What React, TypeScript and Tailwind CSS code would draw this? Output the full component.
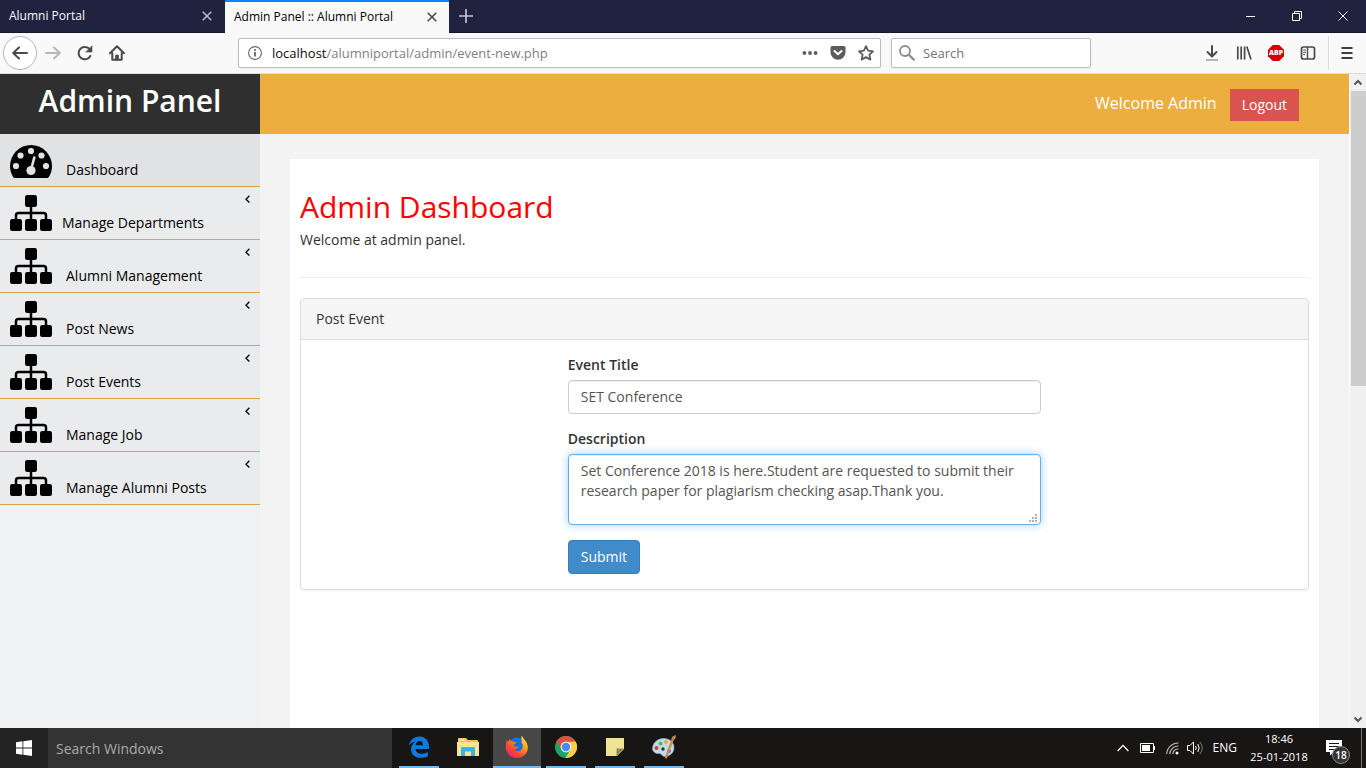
import React from "react";

const ui = "font-['Open_Sans',sans-serif]";

function CloseIcon({ className }: { className: string }) {
  return (
    <svg width="10" height="10" viewBox="0 0 10 10" className={className} aria-hidden="true">
      <path d="M0.7 0.7 9.3 9.3M9.3 0.7 0.7 9.3" stroke="currentColor" strokeWidth="1.6" fill="none" />
    </svg>
  );
}

function TabStrip() {
  return (
    <header className="flex h-[33px] shrink-0 border-b border-[#14162d] bg-[#202340] text-[12px]">
      <div className="-mb-px flex h-[33px] w-[225px] items-center border-b border-[#14162d] pr-[13px] pl-[9px] text-[#f9f9fa]">
        <span className="flex-1 truncate">Alumni Portal</span>
        <button type="button" aria-label="Close Alumni Portal"><CloseIcon className="text-[#b5b6c4]" /></button>
      </div>
      <div className="-mb-px flex h-[33px] w-[224px] items-center border-t-2 border-[#0a84ff] bg-[#f9f9fa] pr-[12px] pb-[2px] pl-[9px] text-black">
        <span className="flex-1 truncate">Admin Panel :: Alumni Portal</span>
        <button type="button" aria-label="Close Admin Panel"><CloseIcon className="text-[#4a4a4f]" /></button>
      </div>
      <button type="button" aria-label="New tab" className="ml-[10px] flex w-[14px] items-center justify-center">
        <svg width="14" height="14" viewBox="0 0 14 14" aria-hidden="true">
          <path d="M7 0V14M0 7H14" stroke="#c3c4d0" strokeWidth="1.7" />
        </svg>
      </button>
      <div className="ml-auto flex">
        <button type="button" aria-label="Minimize" className="flex w-[46px] items-center justify-center">
          <svg width="10" height="10" viewBox="0 0 10 10"><path d="M0 5.5H9" stroke="#fff" /></svg>
        </button>
        <button type="button" aria-label="Restore" className="flex w-[46px] items-center justify-center">
          <svg width="10" height="10" viewBox="0 0 10 10">
            <path d="M0.5 2.5H7.5V9.5H0.5ZM2.5 2.5V0.5H9.5V7.5H7.5" stroke="#fff" fill="none" />
          </svg>
        </button>
        <button type="button" aria-label="Close window" className="flex w-[46px] items-center justify-center">
          <svg width="10" height="10" viewBox="0 0 10 10"><path d="M0.5 0.5 9.5 9.5M9.5 0.5 0.5 9.5" stroke="#fff" /></svg>
        </button>
      </div>
    </header>
  );
}

const toolButton = "flex h-8 w-8 shrink-0 items-center justify-center";

function Toolbar() {
  return (
    <nav className="flex h-[41px] shrink-0 items-center border-b border-[#dcdcdc] bg-[#f9f9fa] pl-[3px]">
      <button type="button" aria-label="Back" className="flex h-[34px] w-[34px] shrink-0 items-center justify-center rounded-full border border-[#b5b5b5] bg-white">
        <svg width="16" height="16" viewBox="0 0 16 16" fill="none" stroke="#4a4a4d" strokeWidth="2" strokeLinecap="round" strokeLinejoin="round">
          <path d="M15 8H1.5M7 2.500 1.2 8 7 13.500" />
        </svg>
      </button>
      <button type="button" aria-label="Forward" className={toolButton}>
        <svg width="16" height="16" viewBox="0 0 16 16" fill="none" stroke="#b7b7b9" strokeWidth="2" strokeLinecap="round" strokeLinejoin="round">
          <path d="M1 8H14.5M9 2.500 14.8 8 9 13.500" />
        </svg>
      </button>
      <button type="button" aria-label="Reload" className={toolButton}>
        <svg width="16" height="16" viewBox="0 0 16 16" fill="none" stroke="#4a4a4d" strokeWidth="2" strokeLinecap="round">
          <path d="M13.3 11A6.2 6.2 0 1 1 12 3.6" />
          <path d="M15 1V7H9Z" fill="#4a4a4d" strokeWidth="0.6" />
        </svg>
      </button>
      <button type="button" aria-label="Home" className={toolButton}>
        <svg width="16" height="16" viewBox="0 0 16 16" fill="none" stroke="#4a4a4d" strokeWidth="2" strokeLinecap="round" strokeLinejoin="round">
          <path d="M1 8.3 8 1.3 15 8.3M3.3 8V14.8H12.7V8" />
          <path d="M6.500 14.8V10H9.500V14.8Z" fill="#4a4a4d" strokeWidth="0.6" />
        </svg>
      </button>
      <div className="w-[105px] shrink" />
      <div className="flex h-[30px] min-w-0 flex-1 items-center rounded-[2px] border border-[#bdbdbd] bg-white shadow-[0_1px_3px_rgba(0,0,0,0.06)]">
        <svg width="14" height="14" viewBox="0 0 14 14" className="ml-[9px] shrink-0">
          <circle cx="7" cy="7" r="6.4" fill="none" stroke="#6a6a6d" strokeWidth="1.1" />
          <path d="M7 6V10.5" stroke="#5a5a5d" strokeWidth="1.7" />
          <circle cx="7" cy="3.9" r="1" fill="#5a5a5d" />
        </svg>
        <a href="#address" className="ml-[10px] min-w-0 flex-1 truncate pt-[2px] text-[13px] text-[#808083]">
          <span className="text-[#0c0c0d]">localhost</span>/alumniportal/admin/event-new.php
        </a>
        <div className="mr-[6px] flex shrink-0 items-center gap-[12px]">
          <button type="button" aria-label="Page actions">
            <svg width="16" height="16" viewBox="0 0 16 16" fill="#5c5c5f">
              <circle cx="2.4" cy="8" r="1.9" /><circle cx="8" cy="8" r="1.9" /><circle cx="13.6" cy="8" r="1.9" />
            </svg>
          </button>
          <button type="button" aria-label="Save to Pocket">
            <svg width="16" height="16" viewBox="0 0 16 16">
              <path d="M2 1H14A1.8 1.8 0 0 1 15.5 2.8V7.3A7.5 7.5 0 0 1 0.5 7.3V2.8A1.8 1.8 0 0 1 2 1Z" fill="#5c5c5f" />
              <path d="M4.5 6 8 9.3 11.5 6" fill="none" stroke="#fff" strokeWidth="2" strokeLinecap="round" strokeLinejoin="round" />
            </svg>
          </button>
          <button type="button" aria-label="Bookmark">
            <svg width="16" height="16" viewBox="0 0 16 16">
              <path d="M8 1.2 10.1 5.7 15 6.3 11.4 9.6 12.4 14.6 8 12.1 3.6 14.6 4.6 9.6 1 6.3 5.9 5.7Z" fill="none" stroke="#5c5c5f" strokeWidth="1.8" strokeLinejoin="round" />
            </svg>
          </button>
        </div>
      </div>
      <label className="ml-[10px] flex h-[30px] w-[200px] shrink-0 items-center rounded-[2px] border border-[#bdbdbd] bg-white pl-[7px] shadow-[0_1px_3px_rgba(0,0,0,0.06)]">
        <svg width="16" height="16" viewBox="0 0 16 16" className="shrink-0" fill="none" stroke="#8b8b8d" strokeWidth="1.8" strokeLinecap="round">
          <circle cx="6" cy="6" r="5" /><path d="M9.8 9.8 14.8 14.6" strokeWidth="2.2" />
        </svg>
        <input type="text" aria-label="Search" placeholder="Search" className="ml-2 w-full min-w-0 pt-[2px] text-[13px] outline-none placeholder:text-[#737376]" />
      </label>
      <div className="w-[105px] shrink" />
      <button type="button" aria-label="Downloads" className={toolButton}>
        <svg width="14" height="16" viewBox="0 0 14 16" fill="none">
          <path d="M7 1V11M2.5 7 7 11.5 11.5 7" stroke="#4a4a4d" strokeWidth="2" strokeLinecap="round" strokeLinejoin="round" />
          <path d="M1 15H13" stroke="#b4b4b6" strokeWidth="2" />
        </svg>
      </button>
      <button type="button" aria-label="Library" className={toolButton}>
        <svg width="16" height="14" viewBox="0 0 16 14" stroke="#4a4a4d" strokeWidth="1.700">
          <path d="M1.8 0.5V13.5M5.2 0.5V13.5M8.6 0.5V13.5M10.8 0.6 15 13.4" />
        </svg>
      </button>
      <button type="button" aria-label="Adblock Plus" className={toolButton}>
        <span className="flex h-4 w-4 items-center justify-center bg-[#d40000] text-[7px] font-extrabold text-white [clip-path:polygon(30%_0,70%_0,100%_30%,100%_70%,70%_100%,30%_100%,0_70%,0_30%)]">
          ABP
        </span>
      </button>
      <button type="button" aria-label="Sidebars" className={toolButton}>
        <svg width="16" height="16" viewBox="0 0 16 16" fill="none" stroke="#4a4a4d">
          <rect x="1.500" y="2" width="13" height="12" rx="2" strokeWidth="1.700" />
          <path d="M7.5 2V14" strokeWidth="1.4" /><path d="M3.200 5H6M3.200 7.3H6M3.200 9.6H5" />
        </svg>
      </button>
      <div className="ml-1 h-[34px] w-px bg-[#dcdcdc]" />
      <button type="button" aria-label="Menu" className="flex h-8 w-9 shrink-0 items-center justify-center">
        <svg width="12" height="12" viewBox="0 0 12 12" stroke="#3f3f43" strokeWidth="2"><path d="M0.500 1H11.500M0.500 6H11.500M0.500 11H11.500" /></svg>
      </button>
      <div className="w-px" />
    </nav>
  );
}

function GaugeIcon() {
  return (
    <svg width="42" height="33" viewBox="0 0 42 33" aria-hidden="true">
      <path d="M21 0A21 21 0 0 0 0 21C0 25 1.100 28.800 3.200 32.100A2 2 0 0 0 4.700 33H37.300A2 2 0 0 0 38.800 32.100C40.900 28.800 42 25 42 21A21 21 0 0 0 21 0Z" fill="#000" />
      <g fill="#e0e2e4">
        <circle cx="6" cy="21" r="3.100" /><circle cx="10.500" cy="10.500" r="3.100" /><circle cx="21" cy="6" r="3.100" />
        <circle cx="31.500" cy="10.500" r="3.100" /><circle cx="36" cy="21" r="3.100" /><circle cx="21" cy="25.500" r="4.600" />
      </g>
      <path d="M21.500 23 24.300 12.500" stroke="#e0e2e4" strokeWidth="2.600" strokeLinecap="round" />
    </svg>
  );
}

function SitemapIcon() {
  return (
    <svg width="42" height="36" viewBox="0 0 42 36" aria-hidden="true">
      <path d="M6 25V20.500Q6 18 8.500 18H33.500Q36 18 36 20.500V25M21 10V26" fill="none" stroke="#000" strokeWidth="2.500" />
      <rect x="15" y="0" width="12" height="12" rx="2.200" /><rect x="0" y="24" width="12" height="12" rx="2.200" />
      <rect x="15" y="24" width="12" height="12" rx="2.200" /><rect x="30" y="24" width="12" height="12" rx="2.200" />
    </svg>
  );
}

const menu = ["Manage Departments", "Alumni Management", "Post News", "Post Events", "Manage Job", "Manage Alumni Posts"];

function Sidebar() {
  return (
    <aside className="w-[260px] shrink-0 bg-[#eff1f3] text-[14px] leading-5 text-black">
      <div className="h-[60px] bg-[#2f2f2f] pt-[7px] text-center text-[30px] leading-[40px] font-semibold text-white">Admin Panel</div>
      <ul>
        <li>
          <a href="#dashboard" className="flex h-[53px] items-end gap-[14px] border-b border-[#d9a441] bg-[#e0e2e4] px-[10px] pb-[6px]">
            <span className="pb-[2px]"><GaugeIcon /></span>Dashboard
          </a>
        </li>
        {menu.map((name, i) => (
          <li key={name}>
            <a href="#menu" className={`flex h-[53px] items-end border-b border-[#d9a441] bg-[#e9ebed] px-[10px] pb-[6px] ${i === 0 ? "gap-[10px]" : "gap-[14px]"}`}>
              <span className="pb-[2px]"><SitemapIcon /></span>
              <span>{name}</span>
              <svg width="5" height="8" viewBox="0 0 5 8" className="mt-2 ml-auto self-start" fill="none" stroke="#111" strokeWidth="1.400">
                <path d="M4.400 0.800 1 4.200 4.400 7.600" />
              </svg>
            </a>
          </li>
        ))}
      </ul>
    </aside>
  );
}

function EventForm() {
  return (
    <section className="rounded-[4px] border border-[#ddd] shadow-[0_1px_1px_rgba(0,0,0,0.05)]">
      <h2 className="rounded-t-[3px] border-b border-[#ddd] bg-[#f5f5f5] px-[15px] py-[10px]">Post Event</h2>
      <form className="mx-auto w-1/2 p-[15px]" onSubmit={(e) => e.preventDefault()}>
        <label htmlFor="event-title" className="block font-semibold">Event Title</label>
        <input
          id="event-title"
          type="text"
          defaultValue="SET Conference"
          className="mt-[5px] mb-[15px] block h-[34px] w-full rounded-[4px] border border-[#ccc] bg-white px-3 pb-[2px] text-[#555] shadow-[inset_0_1px_1px_rgba(0,0,0,0.075)] outline-none"
        />
        <label htmlFor="event-description" className="block font-semibold">Description</label>
        <div className="relative mt-[5px] mb-[15px]">
          <textarea
            id="event-description"
            defaultValue="Set Conference 2018 is here.Student are requested to submit their research paper for plagiarism checking asap.Thank you."
            className="block h-[71px] w-full resize-none rounded-[4px] border border-[#66afe9] bg-white px-3 py-[6px] text-[#555] shadow-[inset_0_1px_1px_rgba(0,0,0,0.075),0_0_8px_rgba(102,175,233,0.6)] outline-none"
          />
          <svg width="8" height="8" viewBox="0 0 8 8" fill="#b3b3b3" className="absolute right-1 bottom-[3px]" aria-hidden="true">
            <path d="M6 0H8V2H6ZM3 3H5V5H3ZM6 3H8V5H6ZM0 6H2V8H0ZM3 6H5V8H3ZM6 6H8V8H6Z" />
          </svg>
        </div>
        <button type="submit" className="block h-[34px] rounded-[4px] border border-[#357ebd] bg-[#428bca] px-3 text-white">Submit</button>
      </form>
    </section>
  );
}

function Page() {
  return (
    <div className="flex min-h-0 flex-1">
      <div className="flex min-w-0 flex-1 overflow-hidden">
        <Sidebar />
        <div className="flex min-w-0 flex-1 flex-col bg-[#f3f3f3] text-[14px] leading-5 text-[#333]">
          <div className="flex h-[60px] shrink-0 items-start justify-end bg-[#ecae3f] pt-[15px] pr-[50px] text-white">
            <span className="mr-[13px] pt-1 text-[16px]">Welcome Admin</span>
            <a href="#logout" className="flex h-8 items-center bg-[#d9534f] px-3">Logout</a>
          </div>
          <main className="mx-[30px] mt-[25px] flex-1 bg-white px-[10px] pt-[31px]">
            <h1 className="text-[30px] leading-[34px] text-[#f00]">Admin Dashboard</h1>
            <p className="mt-[6px]">Welcome at admin panel.</p>
            <hr className="mt-[27px] mb-[20px] border-[#eee]" />
            <EventForm />
          </main>
        </div>
      </div>
      <div className="flex w-[17px] shrink-0 flex-col items-center border-l border-white bg-[#f0f0f0]" aria-hidden="true">
        <svg width="16" height="17" viewBox="0 0 16 17" fill="none" stroke="#555" strokeWidth="2"><path d="M4.500 10.500 8 7 11.500 10.500" /></svg>
        <div className="h-[295px] w-[15px] bg-[#cdcdcd]" />
        <svg width="16" height="17" viewBox="0 0 16 17" className="mt-auto" fill="none" stroke="#555" strokeWidth="2"><path d="M4.500 6.500 8 10 11.500 6.500" /></svg>
      </div>
    </div>
  );
}

function EdgeIcon() {
  return (
    <svg width="22" height="22" viewBox="0 0 22 22">
      <path d="M1 9.500C2 4 6 0.500 11.500 0.500 17.500 0.500 21 5 21 10.500V13H7.500C7.700 16.200 10.500 17.800 13.500 17.800 16 17.800 18 17.200 19.800 16.100V20.300C18 21.300 15.500 21.800 12.800 21.800 7 21.800 3 18.400 3 13.200 3 9.800 5 7 8.200 5.500 5 5.900 2.500 7.300 1 9.500ZM7.600 9.200H15C15 6.500 13.600 5 11.500 5 9.400 5 8 6.700 7.600 9.200Z" fill="#0c7bdc" fillRule="evenodd" />
    </svg>
  );
}

function FolderIcon() {
  return (
    <svg width="22" height="20" viewBox="0 0 22 20">
      <path d="M1 2Q1 1 2 1H9L11 3H20Q21 3 21 4V18H1Z" fill="#f2c14e" />
      <path d="M0 5H22V19H0Z" fill="#ffe394" /><path d="M2 2.500H8V3.500H2Z" fill="#fff" />
      <path d="M4 11Q4 10 5 10H17Q18 10 18 11V19H14V14.500H8V19H4Z" fill="#37b5e8" />
    </svg>
  );
}

function FirefoxIcon() {
  return (
    <svg width="24" height="24" viewBox="0 0 24 24">
      <defs>
        <linearGradient id="fx" x1="0.9" y1="0" x2="0.1" y2="1">
          <stop offset="0" stopColor="#fff44f" /><stop offset="0.35" stopColor="#ffa116" /><stop offset="0.65" stopColor="#ff4a32" /><stop offset="1" stopColor="#e3167d" />
        </linearGradient>
      </defs>
      <circle cx="12" cy="11" r="8.500" fill="#1b6fd8" />
      <path d="M2 5C2.600 6 3 6.500 3.500 6.700L5 4C5.300 5.500 6.200 6.400 8 6.700L11 7C11 8.200 9.800 9 8.600 9.600 8.500 11.500 10.500 12.400 13.500 11.300 13 13.500 11 14.500 9 14 10.500 16.500 14 17 16.500 14.500 18.500 12 18 8.500 15.500 6.500L17 7C16.300 4.500 16 2 17 0.500 17.500 3.500 22.500 6 22.800 12 23 19 17.500 23 12 23 5.500 23 0.500 18.500 0.800 12 0.900 9.500 1.200 7 2 5Z" fill="url(#fx)" />
    </svg>
  );
}

function ChromeIcon() {
  return (
    <svg width="22" height="22" viewBox="0 0 22 22">
      <circle cx="11" cy="11" r="11" fill="#1fa463" />
      <path d="M1.500 5.500A11 11 0 0 1 20.500 5.500L11 6 6.700 13.500Z" fill="#dd5144" />
      <path d="M20.500 5.500A11 11 0 0 1 10.500 22L15.500 13.500 11 6Z" fill="#ffcd46" />
      <circle cx="11" cy="11" r="5.400" fill="#f1f1f1" /><circle cx="11" cy="11" r="4.200" fill="#4a8af4" />
    </svg>
  );
}

function NoteIcon() {
  return (
    <svg width="18" height="18" viewBox="0 0 18 18">
      <path d="M0 0H18V11L11 18H0Z" fill="#f0e394" /><path d="M10.500 10.500H18L10.500 18Z" fill="#8d8656" />
    </svg>
  );
}

function PaintIcon() {
  return (
    <svg width="24" height="24" viewBox="0 0 24 24">
      <path d="M11 3.500C17 3 22 7 22 12.500 22 18 17.500 21.500 13 21.500 9.500 21.500 10 18.500 7.500 18.500 4 19 0.500 17 0.500 13.500 0.500 8.500 5 4 11 3.500Z" fill="#bfdcee" stroke="#87b3cf" strokeWidth="0.600" />
      <circle cx="4.500" cy="13" r="2" fill="#d93b30" /><circle cx="8.500" cy="8.500" r="2" fill="#58b947" /><circle cx="14" cy="7" r="1.900" fill="#f5a623" />
      <circle cx="11" cy="14" r="1.700" fill="#26323a" /><circle cx="17" cy="16" r="2" fill="#3c82c4" />
      <path d="M20.500 5 14 22.500" stroke="#d9873a" strokeWidth="2.200" strokeLinecap="round" />
      <path d="M20 5.500C18.500 3 20 1 23.800 0.300 24 2.500 23.500 5 20 5.500Z" fill="#b98356" />
    </svg>
  );
}

const apps = [
  { name: "Edge", icon: <EdgeIcon />, cell: "", line: "w-10 bg-[#76b9ed]" },
  { name: "File Explorer", icon: <FolderIcon />, cell: "", line: "w-10" },
  { name: "Firefox", icon: <FirefoxIcon />, cell: "bg-[#474747]", line: "w-12 bg-[#76b9ed]" },
  { name: "Chrome", icon: <ChromeIcon />, cell: "", line: "w-10 bg-[#76b9ed]" },
  { name: "Sticky Notes", icon: <NoteIcon />, cell: "", line: "w-10 bg-[#76b9ed]" },
  { name: "Paint", icon: <PaintIcon />, cell: "", line: "w-10 bg-[#76b9ed]" },
];

function Taskbar() {
  return (
    <footer className="flex h-10 shrink-0 bg-[#181615] text-white">
      <button type="button" aria-label="Start" className="flex w-12 items-center justify-center bg-[#232323]">
        <svg width="16" height="16" viewBox="0 0 16 16" fill="#fff">
          <path d="M0 2.200 6.500 1.300V7.600H0ZM7.300 1.200 16 0V7.600H7.300ZM0 8.400H6.500V14.700L0 13.800ZM7.300 8.400H16V16L7.300 14.800Z" />
        </svg>
      </button>
      <input aria-label="Search Windows" type="text" placeholder="Search Windows" className="w-[344px] min-w-0 bg-[#333] px-2 text-[14px] outline-none placeholder:text-[#a9a9a9]" />
      <div className="ml-[3px] flex gap-px">
        {apps.map((app) => (
          <button key={app.name} type="button" aria-label={app.name} className={`flex w-12 flex-col items-center ${app.cell}`}>
            <span className="flex flex-1 items-center">{app.icon}</span>
            <span className={`h-[2px] ${app.line}`} />
          </button>
        ))}
      </div>
      <div className="ml-auto flex items-center text-[12px]">
        <button type="button" aria-label="Show hidden icons">
          <svg width="12" height="8" viewBox="0 0 12 8" fill="none" stroke="#fff" strokeWidth="1.300"><path d="M0.600 7 6 1.400 11.400 7" /></svg>
        </button>
        <svg width="15" height="10" viewBox="0 0 15 10" className="ml-[11px]" aria-hidden="true">
          <path d="M0.500 0.500H13.500V9.500H0.500ZM14.500 3V7" fill="none" stroke="#fff" /><path d="M2 2H10V8H2Z" fill="#fff" />
        </svg>
        <svg width="13" height="13" viewBox="0 0 13 13" className="ml-[11px]" fill="none" stroke="#b5b5b5" strokeWidth="1.200" aria-hidden="true">
          <path d="M0.700 12A11.500 11.500 0 0 1 12.500 1M3.700 12A8.500 8.500 0 0 1 12.500 4M6.700 12A5.500 5.500 0 0 1 12.500 7" />
          <circle cx="11" cy="11" r="1.500" fill="#fff" stroke="none" />
        </svg>
        <svg width="16" height="14" viewBox="0 0 16 14" className="ml-[8px]" fill="none" stroke="#fff" aria-hidden="true">
          <path d="M0.500 4.500H3L6.500 1V13L3 9.500H0.500ZM8.500 5Q10 7 8.500 9M10.800 3Q13.500 7 10.800 11" /><path d="M13 1Q17.500 7 13 13" stroke="#777" />
        </svg>
        <span className="ml-[10px]">ENG</span>
        <div className="ml-[12px] w-[60px] text-center text-[11px] leading-[18px]">
          <div>18:46</div>
          <div>25-01-2018</div>
        </div>
        <button type="button" aria-label="18 notifications" className="relative ml-[17px] h-6 w-[26px]">
          <svg width="17" height="17" viewBox="0 0 17 17">
            <path d="M0 0H16V12H8L4 15.500V12H0Z" fill="#fff" /><path d="M3 3.500H13M3 6.500H13M3 9.500H9" stroke="#181615" />
          </svg>
          <span className="absolute -bottom-1 left-[6px] flex h-[18px] w-[18px] items-center justify-center rounded-full border border-[#8d8d8d] bg-[#343434] text-[10px] font-semibold">18</span>
        </button>
        <span className="ml-[9px] h-10 w-px bg-[#777]" />
        <span className="w-1" />
      </div>
    </footer>
  );
}

export default function App() {
  return (
    <div className={`flex h-screen flex-col overflow-hidden ${ui}`}>
      <TabStrip />
      <Toolbar />
      <Page />
      <Taskbar />
    </div>
  );
}
